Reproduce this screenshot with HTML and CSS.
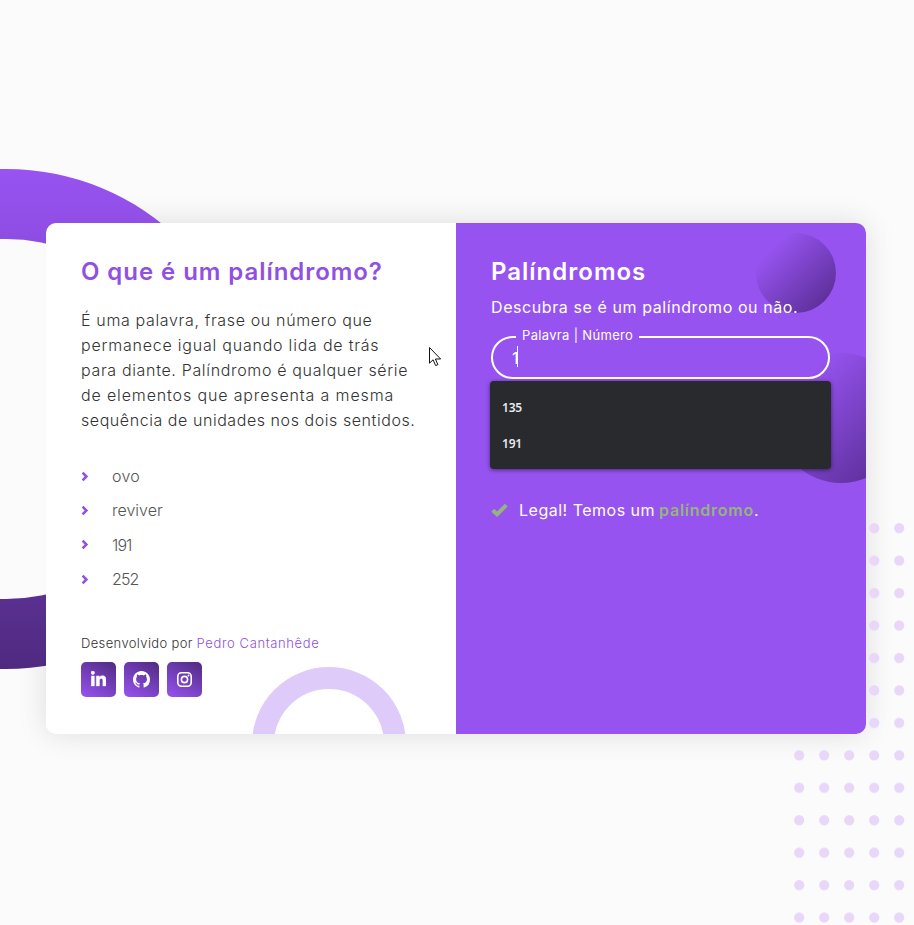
FILE: index.html
```html
<!DOCTYPE html>
<html lang="pt-BR">
<head>
<meta charset="utf-8">
<title>Palíndromos</title>
<link rel="stylesheet" href="styles.css">
</head>
<body>
<div class="ring"></div>
<svg class="dots" width="120" height="402" aria-hidden="true">
  <defs><pattern id="dot" width="25" height="32.45" patternUnits="userSpaceOnUse"><circle cx="5.2" cy="5.2" r="5.1" fill="#e8d7f8"/></pattern></defs>
  <rect width="120" height="402" fill="url(#dot)"/>
</svg>
<main class="card">
  <section class="about">
    <h1 class="title">O que é um palíndromo?</h1>
    <p class="text">
      <span class="l1">É uma palavra, frase ou número que</span>
      <span class="l2">permanece igual quando lida de trás</span>
      <span class="l3">para diante. Palíndromo é qualquer série</span>
      <span class="l4">de elementos que apresenta a mesma</span>
      <span class="l5">sequência de unidades nos dois sentidos.</span>
    </p>
    <ul class="examples">
      <li><svg class="chev" viewBox="0 0 8 10"><path d="M1.6 1.2 5.4 5 1.6 8.8"/></svg><span class="word">ovo</span></li>
      <li><svg class="chev" viewBox="0 0 8 10"><path d="M1.6 1.2 5.4 5 1.6 8.8"/></svg>reviver</li>
      <li><svg class="chev" viewBox="0 0 8 10"><path d="M1.6 1.2 5.4 5 1.6 8.8"/></svg><span class="num">191</span></li>
      <li><svg class="chev" viewBox="0 0 8 10"><path d="M1.6 1.2 5.4 5 1.6 8.8"/></svg><span class="num">252</span></li>
    </ul>
    <p class="credit"><span class="dev">Desenvolvido por</span> <a class="author">Pedro Cantanhêde</a></p>
    <div class="social">
      <a class="btn"><svg class="in" width="15" height="15" viewBox="0 0 448 512" preserveAspectRatio="none"><path d="M100.300 448H7.400V148.900h92.900zM53.800 108.100C24.100 108.100 0 83.500 0 53.800a53.800 53.800 0 0 1 107.600 0c0 29.700-24.100 54.300-53.800 54.300zM447.900 448h-92.700V302.400c0-34.700-.7-79.200-48.300-79.200-48.300 0-55.700 37.700-55.700 76.700V448h-92.800V148.900h89.100v40.800h1.300c12.400-23.500 42.700-48.300 87.900-48.300 94 0 111.300 61.900 111.300 142.300V448z"/></svg></a>
      <a class="btn"><svg width="17" height="17" viewBox="0 0 16 16"><path d="M8 0C3.580 0 0 3.580 0 8c0 3.540 2.290 6.530 5.470 7.590.4.070.55-.17.55-.38 0-.19-.01-.82-.01-1.490-2.010.37-2.530-.49-2.690-.94-.09-.23-.48-.94-.82-1.130-.28-.15-.68-.52-.01-.53.63-.01 1.080.58 1.230.82.72 1.210 1.870.87 2.330.66.07-.52.28-.87.51-1.070-1.780-.2-3.640-.89-3.640-3.950 0-.87.31-1.590.82-2.150-.08-.2-.36-1.020.08-2.120 0 0 .67-.21 2.200.82.64-.18 1.320-.27 2-.27s1.360.09 2 .27c1.530-1.040 2.200-.82 2.200-.82.44 1.100.16 1.920.08 2.120.51.56.82 1.270.82 2.150 0 3.070-1.870 3.750-3.650 3.950.29.25.54.73.54 1.480 0 1.070-.01 1.930-.01 2.200 0 .21.15.46.55.38A8.010 8.010 0 0 0 16 8c0-4.420-3.580-8-8-8z"/></svg></a>
      <a class="btn"><svg width="15" height="15" viewBox="0 0 15 15"><rect x=".8" y=".8" width="13.400" height="13.400" rx="3.600" class="line"/><circle cx="7.500" cy="7.500" r="3.100" class="line"/><circle cx="11.500" cy="3.500" r="1"/></svg></a>
    </div>
    <div class="arch"></div>
  </section>
  <section class="checker">
    <div class="ball small"></div>
    <div class="ball large"></div>
    <h2 class="heading">Palíndromos</h2>
    <p class="lead">Descubra se é um palíndromo ou não.</p>
    <fieldset class="field">
      <legend>Palavra | Número</legend>
      <span class="value">1</span><i class="caret"></i>
    </fieldset>
    <div class="options"><div>135</div><div>191</div></div>
    <p class="result"><svg width="17" height="14" viewBox="0 0 17 14"><path d="M1.700 7.300 6.100 11.300 15.300 2.100"/></svg><span class="msg">Legal! Temos um</span><b>palíndromo</b><span>.</span></p>
  </section>
</main>
<svg class="cursor" width="13" height="20" viewBox="0 0 13 20"><path d="M.5.5v15.700l3.600-3.400 2.500 5.800 2.300-1-2.500-5.600h5.200z" fill="#fff" stroke="#111"/></svg>
</body>
</html>
```
FILE: styles.css
```css
* { box-sizing: border-box; margin: 0; padding: 0; }
body {
  position: relative;
  width: 914px;
  height: 925px;
  overflow: hidden;
  padding: 223px 48px 0 46px;
  background: #fbfbfb;
  font-family: Inter, "Open Sans", sans-serif;
  white-space: nowrap;
}
.ring {
  position: absolute;
  left: -244px;
  top: 169px;
  width: 500px;
  height: 500px;
  border-radius: 50%;
  background: linear-gradient(#9853f2, #4f2a80);
}
.ring::after {
  content: "";
  position: absolute;
  inset: 70px;
  border-radius: 50%;
  background: #fbfbfb;
}
.dots { position: absolute; left: 793.600px; top: 522.600px; }
.card {
  position: relative;
  display: flex;
  width: 820px;
  height: 511px;
  border-radius: 10px;
  overflow: hidden;
  background: #fff;
}
body::before {
  content: "";
  position: absolute;
  z-index: 0;
  left: 46px;
  top: 223px;
  width: 820px;
  height: 511px;
  border-radius: 10px;
  box-shadow: 0 0 30px rgba(0, 0, 0, .12);
}
.about { position: relative; width: 410px; padding: 31px 35px 0; }
.title { font-size: 24px; line-height: 36px; font-weight: 600; color: #9050e2; letter-spacing: .94px; }
.text { margin-top: 18px; font-size: 16px; line-height: 25px; font-weight: 300; color: #333; }
.text span { display: block; }
.l1 { letter-spacing: .65px; }
.l2 { letter-spacing: .78px; }
.l3 { letter-spacing: .66px; }
.l4 { letter-spacing: .86px; }
.l5 { letter-spacing: .56px; }
.examples { list-style: none; margin-top: 26px; color: #555; font-size: 16px; font-weight: 300; }
.examples li { display: flex; align-items: center; height: 34.300px; }
.word { letter-spacing: .3px; }
.num { letter-spacing: -.9px; }
.chev { width: 8px; height: 11px; margin-right: 23px; fill: none; stroke: #9050e2; stroke-width: 2.500; }
.credit { margin-top: 37px; font-size: 13px; line-height: 20px; font-weight: 300; color: #333; }
.dev { letter-spacing: .37px; }
.author { color: #9050e2; letter-spacing: .62px; }
.social { display: flex; gap: 8px; margin-top: 9px; }
.btn {
  display: flex;
  align-items: center;
  justify-content: center;
  width: 35px;
  height: 35px;
  border-radius: 5px;
  background: linear-gradient(30deg, #9853f2, #4f2a80);
}
.btn svg { fill: #fff; }
.btn .in { height: 17px; margin-bottom: 1px; stroke: #fff; stroke-width: 14; }
.line { fill: none; stroke: #fff; stroke-width: 1.600; }
.arch {
  position: absolute;
  left: 206px;
  top: 444px;
  width: 154px;
  height: 154px;
  border: 22px solid #dfcbfa;
  border-radius: 50%;
}
.checker {
  position: relative;
  width: 410px;
  padding: 31px 35px 0;
  background: #9653f0;
  color: #fff;
  overflow: hidden;
}
.ball { position: absolute; border-radius: 50%; background: linear-gradient(135deg, #9653f0 20%, #53298a 100%); }
.small { left: 300px; top: 10px; width: 80px; height: 80px; }
.large { left: 320px; top: 130px; width: 130px; height: 130px; }
.heading, .lead, .field, .result { position: relative; }
.heading { font-size: 24px; line-height: 36px; font-weight: 600; letter-spacing: 1px; }
.lead { margin-top: 5px; font-size: 16px; line-height: 24px; letter-spacing: .58px; }
.field {
  display: block;
  width: 339px;
  height: 51px;
  margin-top: 9px;
  padding-left: 19px;
  border: 2px solid #fff;
  border-radius: 22px;
}
.field legend {
  position: relative;
  top: -2px;
  margin-left: 4px;
  padding: 0 6px;
  font-size: 13px;
  line-height: 18px;
  letter-spacing: .33px;
}
.value { display: inline-block; font-size: 16px; line-height: 24px; vertical-align: top; letter-spacing: -1.500px; }
.caret { display: inline-block; width: 1px; height: 21px; background: #fff; }
.options {
  position: absolute;
  left: 34px;
  top: 158px;
  width: 341px;
  height: 88px;
  padding: 9px 12px;
  border-radius: 4px;
  background: #292a2d;
  box-shadow: 0 1px 4px rgba(0, 0, 0, .5);
  font: 600 12px/36px "Noto Sans", sans-serif;
  letter-spacing: -.2px;
  color: #e8eaed;
}
.result { display: flex; align-items: center; margin-top: 119px; font-size: 16px; line-height: 24px; }
.result svg { margin-right: 11px; fill: none; stroke: #95b57c; stroke-width: 4; }
.msg { letter-spacing: .5px; }
.result b { margin-left: 4px; color: #95b57c; font-weight: 600; letter-spacing: .75px; }
.cursor { position: absolute; left: 429px; top: 347px; }
```
